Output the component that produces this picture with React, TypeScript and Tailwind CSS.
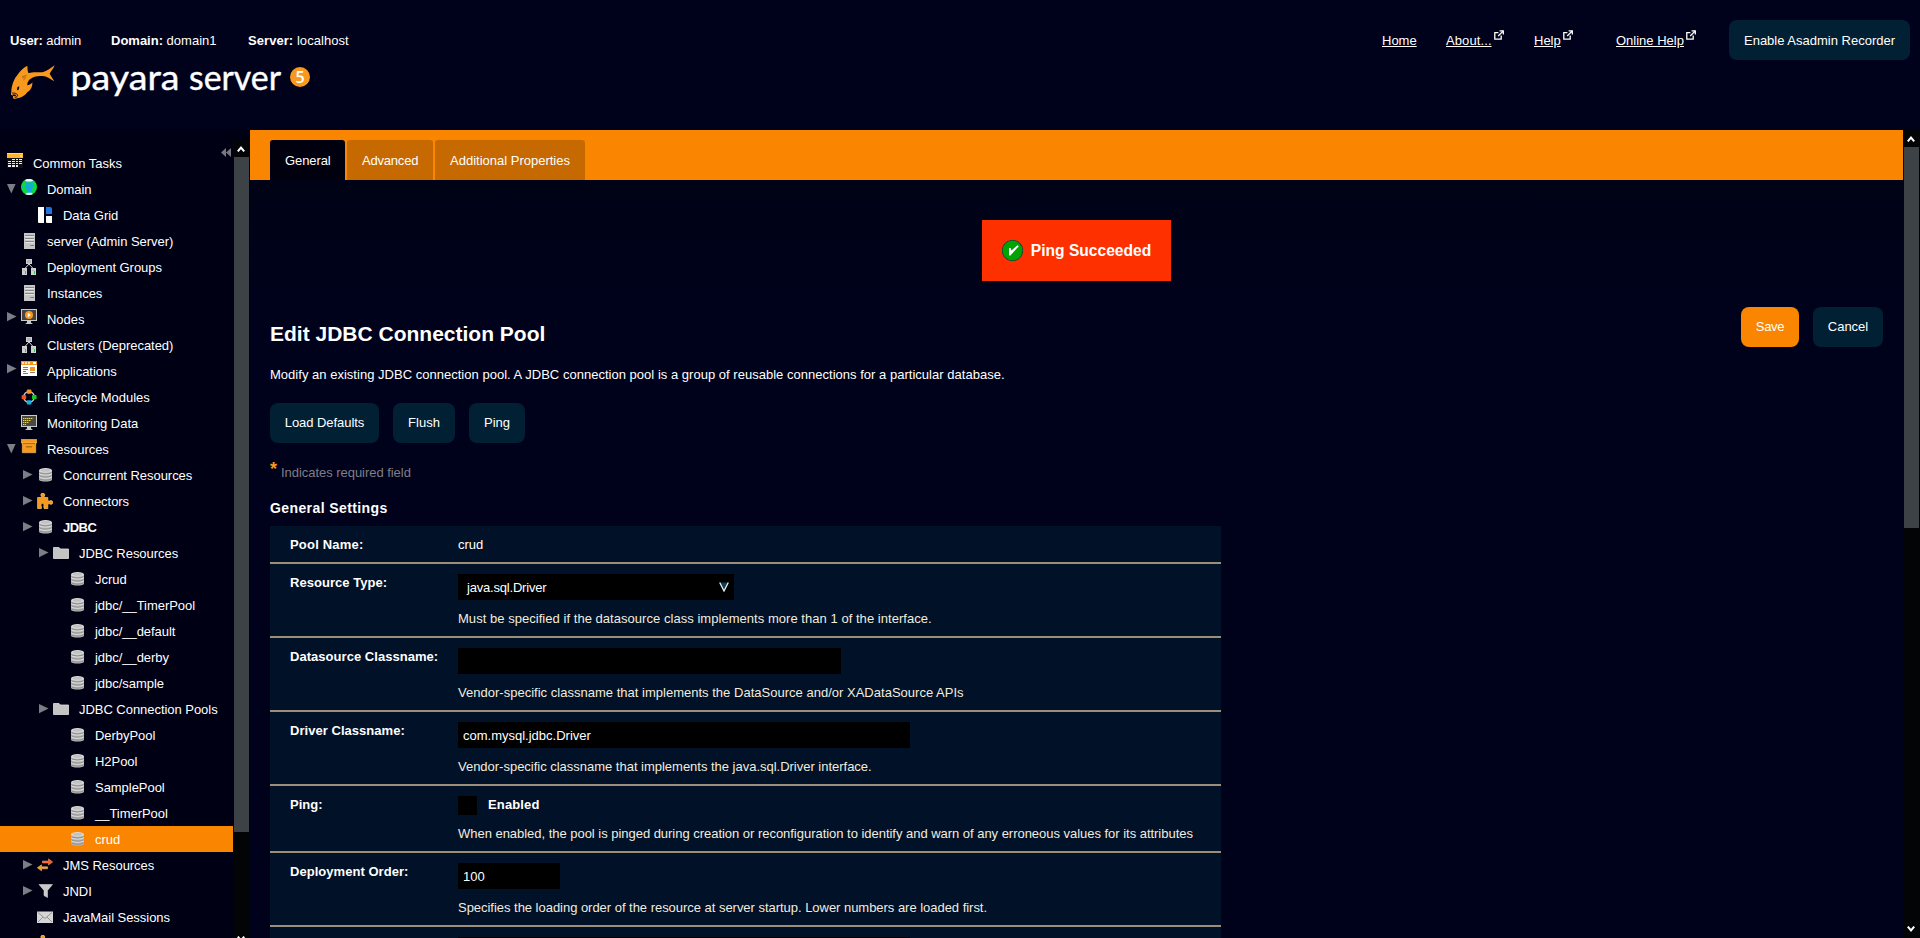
import type { ReactNode } from "react";

function Fish() {
  return (
    <svg width="46" height="36" viewBox="30 192 138 108" className="mt-[15px] shrink-0">
      <path
        fill="#f8981d"
        d="M82 197C83 206 82 214 86 220C100 214 120 219 130 216C142 213 152 204 164 196C160 206 153 214 149 221C153 228 160 238 163 244C150 236 140 229 128 228C112 227 100 229 88 239C84 243 81 250 82 256C87 255 94 252 97 247C98 262 90 272 82 277C74 288 62 295 42 297C37 293 38 289 41 287L34 285C32 282 33 279 34 276C34 260 40 240 50 228C60 212 70 203 82 197Z"
      />
      <path fill="none" stroke="#00021b" strokeWidth="2.6" d="M36 279C44 279 50 280 52 284C54 289 50 293 44 292" />
      <path fill="#00021b" d="M38 283L48 284L47 289L40 288ZM52 262L58 259L56 269L51 271Z" />
      <path fill="none" stroke="#8a5a22" strokeWidth="2" d="M66 230L80 226M67 234L78 230M70 240L77 234" />
    </svg>
  );
}

function ExternalIcon() {
  return (
    <svg width="10" height="10" viewBox="0 0 10 10" fill="none" stroke="#fff" strokeWidth="1.3" className="-mt-[12px] ml-[2px] shrink-0">
      <path d="M4.4 2.6H.8V9.2H7.2V5.6M4.2 6L8.6 1.6M5.6.8H9.3V4.4" />
    </svg>
  );
}

const database = (
  <>
    <path fill="#b9b9b9" d="M2 3.5V12.5C2 15.2 15 15.2 15 12.5V3.5Z" />
    <ellipse cx="8.5" cy="3.4" rx="6.5" ry="2.4" fill="#dadada" />
    <ellipse cx="8.5" cy="3.4" rx="4.8" ry="1.4" fill="#c2c2c2" />
    <path fill="none" stroke="#e6e6e6" d="M2.3 6.6C4.5 8.4 12.5 8.4 14.7 6.6M2.3 9.8C4.5 11.6 12.5 11.6 14.7 9.8" />
    <path fill="none" stroke="#858585" strokeWidth=".9" d="M2.3 5.6C4.5 7.4 12.5 7.4 14.7 5.6M2.3 8.8C4.5 10.6 12.5 10.6 14.7 8.8M2.3 11.8C4.5 13.6 12.5 13.6 14.7 11.8" />
  </>
);
const server = (
  <>
    <path fill="#c6c6c6" d="M3 0H14V16H3Z" />
    <path fill="#858585" d="M4 2H13V3H4ZM4 5H13V6H4ZM4 8H13V9H4ZM9 12H13V13H9Z" />
    <path fill="#e4e4e4" d="M4 3H13V4H4ZM4 6H13V7H4ZM4 9H13V10H4Z" />
    <path fill="#20b030" d="M11 12H13V13H11Z" />
  </>
);
const cluster = (
  <>
    <path fill="none" stroke="#d8d8d8" d="M8 5L3.5 10M8 5L12.5 10" />
    <path fill="#d0d0d0" d="M5 0H11V5H5ZM1 9H6V16H1ZM10 9H15V16H10Z" />
    <path fill="#b4b4b4" d="M6 1H10V4H6ZM2 11H4V12H2ZM11 11H13V12H11Z" />
    <path fill="#20d030" d="M4 12H5V15H4ZM13 12H14V15H13Z" />
  </>
);
const folder = (
  <path fill="#c4c4c4" stroke="#e0e0e0" strokeWidth=".8" d="M.5 13.5V2.5H6L7.5 4H15.5V13.5Z" />
);
const puzzle = (
  <path
    fill="#f59a1c"
    stroke="#ffc56e"
    strokeWidth=".7"
    d="M.6 15.5V4.5H4.4V3.2A1.9 1.9 0 1 1 7.2 3.2V4.5H10.8V8H12.6A1.9 1.9 0 1 1 12.6 10.8H10.8V15.5H7V13.2H6.6A1.6 1.6 0 1 0 4.4 13.2V15.5Z"
  />
);

const icons: Record<string, ReactNode> = {
  database,
  server,
  cluster,
  folder,
  puzzle,
  tasks: (
    <>
      <path fill="#111" d="M0 5H16V15H0Z" />
      <path fill="#ffb52e" d="M0 0H16V5H0Z" />
      <path fill="#ffd88a" d="M0 0H16V1H0ZM13 2H15V4H13Z" />
      <path
        fill="#ededed"
        d="M5 6H8V7H5ZM9 6H11V7H9ZM12 6H15V7H12ZM1 8H4V9H1ZM5 8H8V9H5ZM9 8H11V9H9ZM12 8H15V9H12ZM1 10H4V11H1ZM5 10H8V11H5ZM9 10H11V11H9ZM12 10H15V11H12ZM1 12H4V14H1ZM5 12H8V14H5ZM9 12H11V14H9Z"
      />
    </>
  ),
  globe: (
    <>
      <circle cx="8" cy="8" r="8" fill="#10d93c" />
      <path fill="#12a8e8" d="M4 2.5L8 4L12 2.5L11 5L13.5 7L11 9L11.5 12L9.5 14H6.5L5.5 10L3 8.5L5.5 6ZM.3 6L2 8L.6 10.5Z" />
      <path fill="#14c85a" d="M7 6L9 5.2L9.6 7.4L8 8.6Z" />
      <path fill="#e9fbff" d="M3.5 1.4C6 -.4 10 -.4 12.5 1.4L10 2.5H6ZM4 15C6.5 16.3 9.5 16.3 12 15L10 13.8H6.5Z" />
    </>
  ),
  grid: (
    <>
      <path fill="#fff" d="M1 0H7V16H2Q1 16 1 15ZM9 9H15V16H10Q9 16 9 15Z" />
      <path fill="#1f76e0" d="M9 0H13Q15 0 15 2V7H9Z" />
    </>
  ),
  node: (
    <>
      <path fill="#c9c9c9" d="M0 0H16V12H0Z" />
      <path fill="#444" d="M1 1H15V11H1Z" />
      <circle cx="8" cy="6" r="4" fill="#f79a1c" />
      <path fill="#fff" d="M6.8 3.8V8.2L9.8 6Z" />
      <path fill="#c9c9c9" d="M6 12H10V13.5L12 15H4L6 13.5Z" />
    </>
  ),
  app: (
    <>
      <path fill="#fff" d="M0 0H16V15H0Z" />
      <path fill="#f7941d" d="M0 0H16V4H0ZM9 6H14V10H9Z" />
      <path fill="#ffe0b0" d="M1 1H3V3H1ZM4 1H6V3H4ZM7 1H9V3H7Z" />
      <path fill="#fff" d="M12 1H15V3H12Z" />
      <path fill="#7e7e7e" d="M2 6H7V7H2ZM2 8H7V9H2ZM2 10H5V11H2ZM2 12H7V13H2ZM9 11H14V12H9Z" />
    </>
  ),
  lifecycle: (
    <>
      <circle cx="8" cy="8" r="5.4" fill="none" stroke="#cfcfcf" strokeWidth="1.3" />
      <rect x="5.8" y=".6" width="4.6" height="4.2" rx="1" fill="#f7941d" />
      <rect x=".6" y="6" width="4.6" height="4.2" rx="1" fill="#f4521e" />
      <rect x="11" y="6" width="4.6" height="4.2" rx="1" fill="#12d01c" />
      <rect x="5.8" y="11.2" width="4.6" height="4.4" rx="1" fill="#12b3e6" />
    </>
  ),
  monitor: (
    <>
      <path fill="#c9c9c9" d="M0 0H16V12H0Z" />
      <path fill="#484848" d="M1 1H15V11H1Z" />
      <path fill="none" stroke="#ffe000" strokeDasharray="1.4 .6" d="M2 3.5H12M2 5.5H10M2 7.5H8M2 9.5H5" />
      <path fill="#c9c9c9" d="M6 12H10V13.5L12 15H4L6 13.5Z" />
    </>
  ),
  box: (
    <>
      <path fill="#f59a1c" stroke="#ffc56e" strokeWidth=".6" d="M1.3 4H14.7V13.7H1.3Z" />
      <path fill="#f59a1c" stroke="#ffc56e" strokeWidth=".6" d="M.3 .3H15.7V4H.3Z" />
      <path fill="#b36a10" d="M5 7H11V8.4H5ZM2 4H14V5H2Z" />
    </>
  ),
  arrows: (
    <>
      <path fill="#ff5a1e" stroke="#ffa07a" strokeWidth=".5" d="M5.5 4H11.5V1.8L15.7 5L11.5 8V6H5.5Z" />
      <path fill="#f59a1c" stroke="#ffd08a" strokeWidth=".5" d="M10.5 9.8H4.5V7.8L.3 10.8L4.5 13.8V11.8H10.5Z" />
    </>
  ),
  funnel: <path fill="#c9c9c9" stroke="#e6e6e6" strokeWidth=".5" d="M2 1.5H15.5L10.5 7.5V14.5L7 12.5V7.5Z" />,
  mail: (
    <>
      <path fill="#d6d6d6" d="M0 2.5H16V14H0Z" />
      <path fill="none" stroke="#8c8c8c" strokeWidth=".9" d="M1 3.5L8 9.5L15 3.5M1 13L6 8M15 13L10 8" />
    </>
  ),
};

type Row = { label: string; icon: string; level: number; arrow?: "open" | "closed"; raise?: boolean; bold?: boolean; active?: boolean };

const rows: Row[] = [
  { label: "Common Tasks", icon: "tasks", level: 0, raise: true },
  { label: "Domain", icon: "globe", level: 1, arrow: "open", raise: true },
  { label: "Data Grid", icon: "grid", level: 2 },
  { label: "server (Admin Server)", icon: "server", level: 1 },
  { label: "Deployment Groups", icon: "cluster", level: 1 },
  { label: "Instances", icon: "server", level: 1 },
  { label: "Nodes", icon: "node", level: 1, arrow: "closed", raise: true },
  { label: "Clusters (Deprecated)", icon: "cluster", level: 1 },
  { label: "Applications", icon: "app", level: 1, arrow: "closed", raise: true },
  { label: "Lifecycle Modules", icon: "lifecycle", level: 1 },
  { label: "Monitoring Data", icon: "monitor", level: 1 },
  { label: "Resources", icon: "box", level: 1, arrow: "open", raise: true },
  { label: "Concurrent Resources", icon: "database", level: 2, arrow: "closed" },
  { label: "Connectors", icon: "puzzle", level: 2, arrow: "closed" },
  { label: "JDBC", icon: "database", level: 2, arrow: "closed", bold: true },
  { label: "JDBC Resources", icon: "folder", level: 3, arrow: "closed" },
  { label: "Jcrud", icon: "database", level: 4 },
  { label: "jdbc/__TimerPool", icon: "database", level: 4 },
  { label: "jdbc/__default", icon: "database", level: 4 },
  { label: "jdbc/__derby", icon: "database", level: 4 },
  { label: "jdbc/sample", icon: "database", level: 4 },
  { label: "JDBC Connection Pools", icon: "folder", level: 3, arrow: "closed" },
  { label: "DerbyPool", icon: "database", level: 4 },
  { label: "H2Pool", icon: "database", level: 4 },
  { label: "SamplePool", icon: "database", level: 4 },
  { label: "__TimerPool", icon: "database", level: 4 },
  { label: "crud", icon: "database", level: 4, active: true },
  { label: "JMS Resources", icon: "arrows", level: 2, arrow: "closed" },
  { label: "JNDI", icon: "funnel", level: 2, arrow: "closed" },
  { label: "JavaMail Sessions", icon: "mail", level: 2 },
  { label: "", icon: "puzzle", level: 2 },
];

const indent = ["pl-[7px]", "pl-[7px]", "pl-[23px]", "pl-[39px]", "pl-[55px]"];

function TreeRow({ row }: { row: Row }) {
  return (
    <div className={`flex h-[26px] shrink-0 ${indent[row.level]} ${row.active ? "bg-[#fa8500]" : ""}`}>
      {row.level > 0 && (
        <span className="w-[14px] shrink-0">
          {row.arrow && (
            <svg width="10" height="10" viewBox="0 0 10 10" fill="#7d7d85" className={row.raise && row.arrow === "closed" ? "mt-[6px]" : "mt-[8px]"}>
              {row.arrow === "open" ? <path d="M0 0H8.6L4.3 9.4Z" /> : <path d="M0 0L9.6 4.6L0 9.2Z" />}
            </svg>
          )}
        </span>
      )}
      <svg width="16" height="16" viewBox="0 0 16 16" className={`shrink-0 ${row.raise ? "mt-[3px]" : "mt-[5px]"}`}>
        {icons[row.icon]}
      </svg>
      <span className={`ml-[10px] whitespace-nowrap leading-[27px] ${row.bold ? "font-bold tracking-[-0.5px]" : "tracking-[-0.04px]"}`}>{row.label}</span>
    </div>
  );
}

function Chevron({ down }: { down?: boolean }) {
  return (
    <svg width="8" height="6" viewBox="0 0 8 6" fill="none" stroke="#fff" strokeWidth="2" className={`mr-auto ml-[4px] shrink-0 ${down ? "rotate-180" : ""}`}>
      <path d="M.8 5.4L4 1.6L7.2 5.4" />
    </svg>
  );
}

function Button({ children, className }: { children: ReactNode; className: string }) {
  return <button className={`flex h-10 items-center justify-center rounded-lg whitespace-nowrap ${className}`}>{children}</button>;
}

function Field({ label, help, height, tracking, children }: { label: string; help: string; height: string; tracking: string; children: ReactNode }) {
  return (
    <div className={`flex border-b-2 border-[#9c8f7a] pt-[10px] pl-5 ${height}`}>
      <div className="w-[168px] shrink-0 leading-[17px] font-bold tracking-[0.04px]">{label}</div>
      <div className="flex flex-col items-start">
        {children}
        <div className={`mt-[9px] leading-5 whitespace-nowrap text-[#f3ecdf] ${tracking}`}>{help}</div>
      </div>
    </div>
  );
}

function Header() {
  return (
    <header className="flex h-[130px] shrink-0 flex-col bg-[#00021b]">
      <div className="flex h-[60px] shrink-0 items-end pr-[10px] pl-[10px]">
        <div className="flex h-10 items-center pt-[2px]">
          <span className="w-[101px] tracking-[-0.1px]"><b>User:</b> admin</span>
          <span className="w-[137px]"><b>Domain:</b> domain1</span>
          <span className="tracking-[0.06px]"><b>Server:</b> localhost</span>
        </div>
        <nav className="ml-auto flex h-10 items-center">
          <span className="w-[64px] pt-[2px] underline">Home</span>
          <span className="flex w-[88px] items-center pt-[2px]"><u className="tracking-[0.1px]">About...</u><ExternalIcon /></span>
          <span className="flex w-[82px] items-center pt-[2px]"><u>Help</u><ExternalIcon /></span>
          <span className="flex w-[113px] items-center pt-[2px]"><u>Online Help</u><ExternalIcon /></span>
          <Button className="w-[181px] bg-[#022034] pt-[1px]">Enable Asadmin Recorder</Button>
        </nav>
      </div>
      <div className="-mt-[11px] flex h-[60px] shrink-0 items-start pl-[10px]">
        <Fish />
        <svg width="213" height="58" viewBox="0 0 213 58" className="ml-[14px] overflow-visible" fill="#fff" stroke="#fff" strokeWidth=".4" fontFamily="Lato" fontSize="35">
          <text x="0.5" y="41" textLength="109" lengthAdjust="spacingAndGlyphs">payara</text>
          <text x="119" y="41" textLength="92" lengthAdjust="spacingAndGlyphs">server</text>
        </svg>
        <span className="mt-[18px] ml-[7px] flex size-5 items-center justify-center rounded-full bg-[#f8981d] font-[Open_Sans] text-[16px] leading-5 font-semibold">5</span>
      </div>
    </header>
  );
}

export default function App() {
  return (
    <div className="flex h-[938px] w-[1920px] flex-col overflow-hidden bg-[#00021b] font-['Liberation_Sans',Arial,sans-serif] text-[13px] text-white">
      <Header />
      <div className="flex min-h-0 flex-1">
        <aside className="flex w-[250px] shrink-0 bg-[#000014] pt-[10px]">
          <div className="relative flex w-[233px] flex-col overflow-hidden pt-[10px]">
            <svg width="10" height="9" viewBox="0 0 10 9" fill="#77777f" className="absolute top-[8px] left-[221px]">
              <path d="M5 0V9L0 4.5ZM10 0V9L5 4.5Z" />
            </svg>
            {rows.map((row, i) => (
              <TreeRow key={i} row={row} />
            ))}
          </div>
          <div className="flex w-[17px] flex-col overflow-hidden bg-[#020406] pt-[6px]">
            <Chevron />
            <div className="mx-[1px] mt-[5px] h-[675px] shrink-0 bg-[#3d4247]" />
            <div className="h-[104px] shrink-0" />
            <Chevron down />
          </div>
        </aside>

        <main className="flex min-w-0 flex-1 flex-col overflow-hidden bg-linear-to-b from-[#000314] to-[#00021b] to-20%">
          <div className="flex h-[50px] shrink-0 items-end gap-[2px] bg-[#fa8500] pl-5">
            <div className="flex h-10 w-[75px] items-center rounded-t-[3px] bg-[#00000f] pt-[1px] pl-[15px] tracking-[-0.1px]">General</div>
            <div className="flex h-10 w-[86px] items-center rounded-t-[3px] bg-[#c66900] pt-[1px] pl-[15px] tracking-[-0.2px]">Advanced</div>
            <div className="flex h-10 w-[150px] items-center rounded-t-[3px] bg-[#c66900] pt-[1px] pl-[15px]">Additional Properties</div>
          </div>

          <div className="mt-10 flex h-[61px] shrink-0 items-center self-center bg-[#ff3000] px-5">
            <svg width="21" height="21" viewBox="0 0 21 21">
              <circle cx="10.5" cy="10.5" r="10.6" fill="#123c3c" />
              <circle cx="10.5" cy="10.5" r="9.9" fill="#00a400" />
              <path fill="#fff" d="M7 8H8.6L9.4 10.4L15.6 5.2L16.8 6.2L8.4 15.4H7Z" />
            </svg>
            <span className="ml-[8px] text-[15.6px] leading-5 font-bold">Ping Succeeded</span>
          </div>

          <div className="mt-[26px] flex h-[54px] shrink-0 pr-5 pl-5">
            <h1 className="mt-[15px] text-[21px] leading-6 font-bold">Edit JDBC Connection Pool</h1>
            <div className="ml-auto flex gap-[14px]">
              <Button className="w-[58px] bg-[#fa8500] tracking-[-0.3px]">Save</Button>
              <Button className="w-[70px] bg-[#022034]">Cancel</Button>
            </div>
          </div>

          <p className="mt-[4px] ml-5 h-5 shrink-0 leading-5 tracking-[0.02px]">
            Modify an existing JDBC connection pool. A JDBC connection pool is a group of reusable connections for a particular database.
          </p>

          <div className="mt-[18px] ml-5 flex shrink-0 gap-[14px]">
            <Button className="w-[109px] bg-[#022034] tracking-[-0.05px]">Load Defaults</Button>
            <Button className="w-[62px] bg-[#022034]">Flush</Button>
            <Button className="w-[56px] bg-[#022034]">Ping</Button>
          </div>

          <div className="mt-[20px] ml-5 flex h-5 shrink-0 text-[#7e7e8a]">
            <span className="-mt-[4px] w-[11px] text-[18px] leading-5 font-bold text-[#f8981d]">*</span>
            <span className="leading-5 tracking-[-0.04px]">Indicates required field</span>
          </div>

          <h2 className="mt-[15px] ml-5 h-5 shrink-0 text-[14px] leading-5 font-bold tracking-[0.4px]">General Settings</h2>

          <section className="mt-[8px] ml-5 w-[951px] shrink-0 bg-[#001128]">
            <div className="flex h-[38px] border-b-2 border-[#9c8f7a] pl-5 leading-[37px]">
              <div className="w-[168px] font-bold tracking-[0.2px]">Pool Name:</div>
              <div>crud</div>
            </div>
            <Field label="Resource Type:" height="h-[74px]" tracking="tracking-[0.04px]" help="Must be specified if the datasource class implements more than 1 of the interface.">
              <div className="flex h-[26px] w-[276px] items-center bg-black pl-[9px] leading-[26px] tracking-[-0.2px]">
                <span className="pt-[1px]">java.sql.Driver</span>
                <svg width="10" height="10" viewBox="0 0 10 10" className="mr-[5px] ml-auto">
                  <path fill="#0b3f55" stroke="#e8eef0" strokeWidth="1.3" d="M.7 .5L5 9L9.3 .5" />
                </svg>
              </div>
            </Field>
            <Field label="Datasource Classname:" height="h-[74px]" tracking="tracking-[0.015px]" help="Vendor-specific classname that implements the DataSource and/or XADataSource APIs">
              <div className="h-[26px] w-[383px] bg-black" />
            </Field>
            <Field label="Driver Classname:" height="h-[74px]" tracking="tracking-[-0.015px]" help="Vendor-specific classname that implements the java.sql.Driver interface.">
              <div className="h-[26px] w-[452px] bg-black pl-[5px] leading-[27px]">com.mysql.jdbc.Driver</div>
            </Field>
            <Field
              label="Ping:"
              height="h-[67px]"
              tracking="tracking-[-0.028px]"
              help="When enabled, the pool is pinged during creation or reconfiguration to identify and warn of any erroneous values for its attributes"
            >
              <div className="flex h-[19px] gap-[11px] leading-[17px] font-bold tracking-[0.14px]">
                <span className="w-[19px] bg-black" />
                Enabled
              </div>
            </Field>
            <Field label="Deployment Order:" height="h-[74px]" tracking="tracking-[-0.03px]" help="Specifies the loading order of the resource at server startup. Lower numbers are loaded first.">
              <div className="h-[26px] w-[102px] bg-black pl-[5px] leading-[27px]">100</div>
            </Field>
            <div className="h-[74px] pt-[10px] pl-[188px]">
              <div className="h-[26px] w-[452px] bg-black" />
            </div>
          </section>
        </main>

        <div className="flex w-[17px] shrink-0 flex-col bg-[#020406] pt-[6px] pb-[6px]">
          <Chevron />
          <div className="mx-[1px] mt-[5px] h-[381px] shrink-0 bg-[#3d4247]" />
          <div className="flex-1" />
          <Chevron down />
        </div>
      </div>
    </div>
  );
}
